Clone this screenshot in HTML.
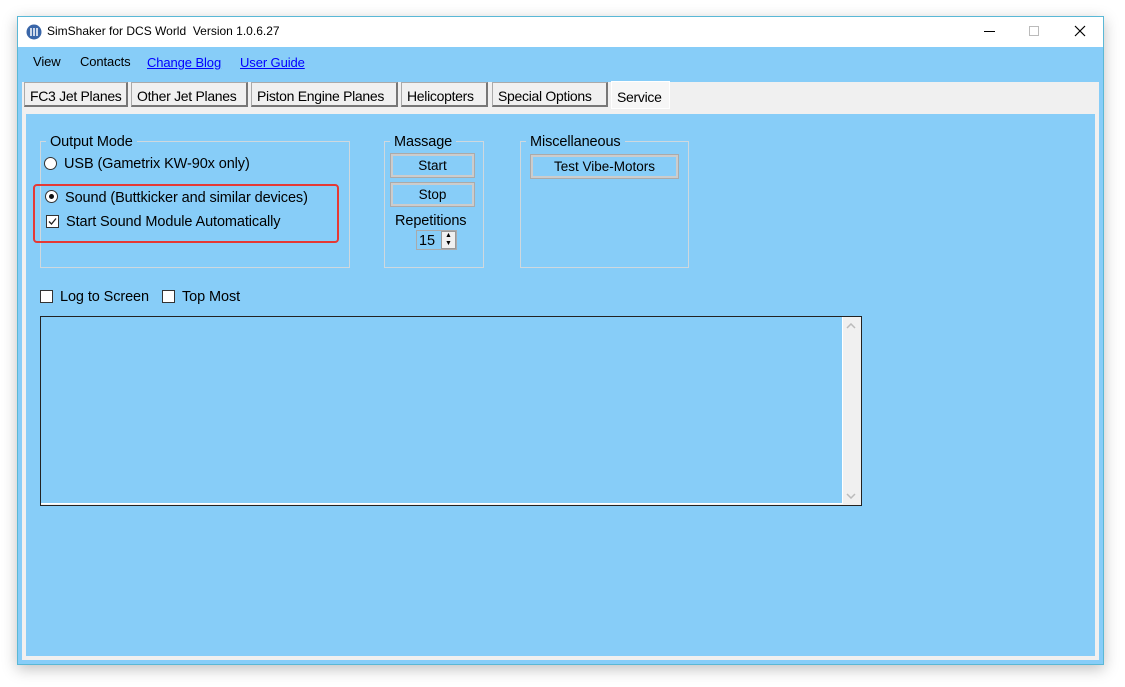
<!DOCTYPE html>
<html><head><style>
*{margin:0;padding:0;box-sizing:border-box}
body{width:1125px;height:687px;background:#fff;font-family:"Liberation Sans",sans-serif;position:relative;overflow:hidden}
.a{position:absolute}
.win{left:17px;top:16px;width:1087px;height:649px;border:1px solid #5ab8d6;background:#87cdf8;box-shadow:0 4px 14px rgba(0,0,0,.25)}
.t{font-size:14.5px;color:#000;white-space:nowrap;letter-spacing:-0.1px}
.tab{top:82px;height:25px;background:#f0f0f0;border:1px solid #aaa;border-right:2px solid #777;border-bottom:2px solid #777;font-size:14px;letter-spacing:-0.3px;padding:5px 0 0 5px;white-space:nowrap;overflow:hidden}
.grp{border:1px solid #cfd8de}
.btn{background:#87cdf8;border:3px solid #ccc;outline:1px solid #aaa;outline-offset:-1px;font-size:13.5px;text-align:center;line-height:17px}
.cb{width:13px;height:13px;border:1px solid #333;background:#fff}
</style></head><body>
<div class="a win"></div>
<div class="a" style="left:18px;top:17px;width:1085px;height:30px;background:#fff"></div>
<svg class="a" style="left:26px;top:24px" width="16" height="16"><circle cx="8" cy="8" r="7.5" fill="#3a66a8"/><path d="M5 4v8M8 4v8M11 4v8" stroke="#fff" stroke-width="1.5"/></svg>
<div class="a" style="left:47px;top:24px;font-size:12px">SimShaker for DCS World&nbsp; Version 1.0.6.27</div>
<div class="a" style="left:984px;top:31px;width:11px;height:1px;background:#000"></div>
<div class="a" style="left:1029px;top:26px;width:10px;height:10px;border:1px solid #bbb"></div>
<svg class="a" style="left:1074px;top:25px" width="12" height="12"><path d="M1 1L11 11M11 1L1 11" stroke="#000" stroke-width="1.2"/></svg>
<div class="a t" style="left:33px;top:54px;font-size:13px">View</div>
<div class="a t" style="left:80px;top:54px;font-size:13px">Contacts</div>
<div class="a t" style="left:147px;top:55px;font-size:13px;color:#00f;text-decoration:underline">Change Blog</div>
<div class="a t" style="left:240px;top:55px;font-size:13px;color:#00f;text-decoration:underline">User Guide</div>
<div class="a" style="left:22px;top:82px;width:1077px;height:578px;background:#f0f0f0"></div>
<div class="a" style="left:26px;top:114px;width:1069px;height:542px;background:#87cdf8"></div>
<div class="a tab" style="left:24px;width:104px">FC3 Jet Planes</div>
<div class="a tab" style="left:131px;width:117px">Other Jet Planes</div>
<div class="a tab" style="left:251px;width:147px">Piston Engine Planes</div>
<div class="a tab" style="left:401px;width:87px">Helicopters</div>
<div class="a tab" style="left:492px;width:116px">Special Options</div>
<div class="a tab" style="left:611px;top:81px;width:59px;height:28px;background:#f6f6f6;border:1px solid #fff;padding-top:7px">Service</div>
<div class="a grp" style="left:40px;top:141px;width:310px;height:127px"></div>
<div class="a t" style="left:46px;top:134px;background:#87cdf8;padding:0 4px">Output Mode</div>
<div class="a" style="left:44px;top:157px;width:13px;height:13px;border-radius:50%;background:#fff;border:1px solid #333"></div>
<div class="a t" style="left:64px;top:156px">USB (Gametrix KW-90x only)</div>
<div class="a" style="left:33px;top:184px;width:306px;height:59px;border:2px solid #e53935;border-radius:4px"></div>
<div class="a" style="left:45px;top:190px;width:13px;height:13px;border-radius:50%;background:#fff;border:1px solid #333"></div>
<div class="a" style="left:49px;top:194px;width:5px;height:5px;border-radius:50%;background:#111"></div>
<div class="a t" style="left:65px;top:190px">Sound (Buttkicker and similar devices)</div>
<div class="a cb" style="left:46px;top:215px"></div>
<svg class="a" style="left:47px;top:216px" width="11" height="11"><path d="M2 5.5L4.5 8L9 2.5" stroke="#222" stroke-width="1.3" fill="none"/></svg>
<div class="a t" style="left:66px;top:214px">Start Sound Module Automatically</div>
<div class="a grp" style="left:384px;top:141px;width:100px;height:127px"></div>
<div class="a t" style="left:390px;top:134px;background:#87cdf8;padding:0 4px">Massage</div>
<div class="a btn" style="left:390px;top:153px;width:85px;height:25px;padding-top:1px">Start</div>
<div class="a btn" style="left:390px;top:182px;width:85px;height:25px;padding-top:1px">Stop</div>
<div class="a t" style="left:395px;top:213px">Repetitions</div>
<div class="a" style="left:416px;top:230px;width:41px;height:20px;border:1px solid #aaa"></div>
<div class="a t" style="left:419px;top:233px">15</div>
<div class="a" style="left:441px;top:231px;width:15px;height:18px;background:#f0f0f0;border:1px solid #999;font-size:7px;line-height:8px;text-align:center">▲<br>▼</div>
<div class="a grp" style="left:520px;top:141px;width:169px;height:127px"></div>
<div class="a t" style="left:526px;top:134px;background:#87cdf8;padding:0 4px">Miscellaneous</div>
<div class="a btn" style="left:530px;top:154px;width:149px;height:25px;padding-top:1px">Test Vibe-Motors</div>
<div class="a cb" style="left:40px;top:290px"></div>
<div class="a t" style="left:60px;top:289px">Log to Screen</div>
<div class="a cb" style="left:162px;top:290px"></div>
<div class="a t" style="left:182px;top:289px">Top Most</div>
<div class="a" style="left:40px;top:316px;width:822px;height:190px;border:1px solid #222;background:#f0f0f0"></div>
<div class="a" style="left:41px;top:317px;width:802px;height:187px;background:#87cdf8;border-right:1px solid #fff;border-bottom:1px solid #fff"></div>
<svg class="a" style="left:846px;top:323px" width="10" height="6"><path d="M1 5L5 1L9 5" stroke="#bbb" stroke-width="1.5" fill="none"/></svg>
<svg class="a" style="left:846px;top:493px" width="10" height="6"><path d="M1 1L5 5L9 1" stroke="#bbb" stroke-width="1.5" fill="none"/></svg>
</body></html>
